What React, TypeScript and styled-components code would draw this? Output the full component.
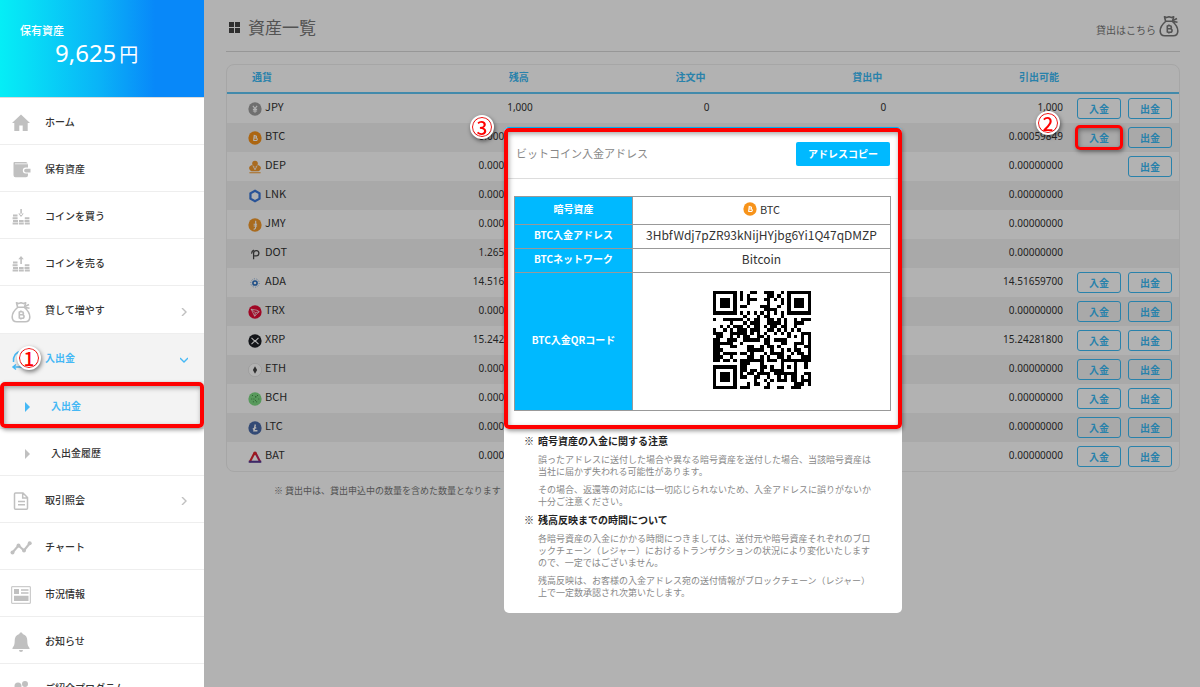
import React from 'react';
import styled, { createGlobalStyle, css } from 'styled-components';

/* ---------- QR symbol (version 3, level M, byte mode) ---------- */

const QR_SIZE = 29;
const QR_DATA = 44;
const QR_TOTAL = 70;
const QR_MASK = 6;

const multiply = (a: number, b: number) => {
  let r = 0;
  for (let i = 7; i >= 0; i--) {
    r = (r << 1) ^ ((r >>> 7) * 0x11d);
    r ^= ((b >>> i) & 1) * a;
  }
  return r;
};

const errorCodewords = (data: number[], count: number) => {
  const gen: number[] = new Array(count).fill(0);
  gen[count - 1] = 1;
  let root = 1;
  for (let i = 0; i < count; i++) {
    for (let j = 0; j < count; j++) {
      gen[j] = multiply(gen[j], root);
      if (j + 1 < count) gen[j] ^= gen[j + 1];
    }
    root = multiply(root, 2);
  }
  const rem: number[] = new Array(count).fill(0);
  for (const byte of data) {
    const factor = byte ^ (rem.shift() as number);
    rem.push(0);
    gen.forEach((g, i) => {
      rem[i] ^= multiply(g, factor);
    });
  }
  return rem;
};

const qrPath = (text: string) => {
  const bits: number[] = [];
  const put = (v: number, n: number) => {
    for (let i = n - 1; i >= 0; i--) bits.push((v >>> i) & 1);
  };
  put(4, 4);
  put(text.length, 8);
  for (const c of text) put(c.charCodeAt(0), 8);
  put(0, 4);
  const data: number[] = [];
  for (let i = 0; i < bits.length; i += 8) data.push(parseInt(bits.slice(i, i + 8).join(''), 2));
  for (let p = 0xec; data.length < QR_DATA; p ^= 0xec ^ 0x11) data.push(p);
  const words = data.concat(errorCodewords(data, QR_TOTAL - QR_DATA));

  const dark = Array.from({ length: QR_SIZE }, () => new Array<boolean>(QR_SIZE).fill(false));
  const fixed = Array.from({ length: QR_SIZE }, () => new Array<boolean>(QR_SIZE).fill(false));
  const set = (x: number, y: number, v: boolean) => {
    if (x < 0 || y < 0 || x >= QR_SIZE || y >= QR_SIZE) return;
    dark[y][x] = v;
    fixed[y][x] = true;
  };
  for (let i = 0; i < QR_SIZE; i++) {
    set(6, i, i % 2 === 0);
    set(i, 6, i % 2 === 0);
  }
  for (const [cx, cy] of [[3, 3], [QR_SIZE - 4, 3], [3, QR_SIZE - 4]]) {
    for (let dy = -4; dy <= 4; dy++) {
      for (let dx = -4; dx <= 4; dx++) {
        const d = Math.max(Math.abs(dx), Math.abs(dy));
        set(cx + dx, cy + dy, d !== 2 && d !== 4);
      }
    }
  }
  for (let dy = -2; dy <= 2; dy++) {
    for (let dx = -2; dx <= 2; dx++) set(22 + dx, 22 + dy, Math.max(Math.abs(dx), Math.abs(dy)) !== 1);
  }
  let rem = QR_MASK;
  for (let i = 0; i < 10; i++) rem = (rem << 1) ^ ((rem >>> 9) * 0x537);
  const format = ((QR_MASK << 10) | rem) ^ 0x5412;
  const bit = (i: number) => ((format >>> i) & 1) === 1;
  for (let i = 0; i <= 5; i++) set(8, i, bit(i));
  set(8, 7, bit(6));
  set(8, 8, bit(7));
  set(7, 8, bit(8));
  for (let i = 9; i < 15; i++) set(14 - i, 8, bit(i));
  for (let i = 0; i < 8; i++) set(QR_SIZE - 1 - i, 8, bit(i));
  for (let i = 8; i < 15; i++) set(8, QR_SIZE - 15 + i, bit(i));
  set(8, QR_SIZE - 8, true);

  let k = 0;
  for (let r = QR_SIZE - 1; r >= 1; r -= 2) {
    if (r === 6) r = 5;
    for (let v = 0; v < QR_SIZE; v++) {
      for (let j = 0; j < 2; j++) {
        const x = r - j;
        const y = ((r + 1) & 2) === 0 ? QR_SIZE - 1 - v : v;
        if (fixed[y][x]) continue;
        const value = k < QR_TOTAL * 8 && ((words[k >>> 3] >>> (7 - (k & 7))) & 1) === 1;
        k++;
        dark[y][x] = value !== ((((x * y) % 2) + ((x * y) % 3)) % 2 === 0);
      }
    }
  }
  return dark.map((row, y) => row.map((v, x) => (v ? `M${x} ${y}h1v1h-1z` : '')).join('')).join('');
};

/* ---------- Styles ---------- */

const Global = createGlobalStyle`
  *, *::before, *::after { box-sizing: border-box; }
  body {
    margin: 0;
    background: #fff;
    color: #333;
    font: 10px/12px "Noto Sans CJK JP", "Noto Sans", sans-serif;
  }
  a { color: inherit; text-decoration: none; }
  button { font: inherit; cursor: pointer; }
  ul, h1, h2, h3, p { margin: 0; padding: 0; list-style: none; }
`;

const Shell = styled.div`
  display: flex;
  height: 100vh;
  overflow: hidden;
`;

const Sidebar = styled.aside`
  flex: 0 0 204px;
  overflow: hidden;
  background: #fff;
`;

const Total = styled.div`
  height: 98px;
  padding: 22px 20px 0;
  color: #fff;
  background: linear-gradient(90deg, #05eef6 0%, #07e0f6 12%, #0ab4f7 48%, #0888f9 76%);
  border-bottom: 1px solid #dcdcdc;
`;

const TotalLabel = styled.div`
  font-size: 11px;
  line-height: 16px;
  font-weight: 500;
`;

const TotalValue = styled.div`
  padding-left: 35px;
  font: 24px/30px "Noto Sans", sans-serif;
  white-space: nowrap;
`;

const Yen = styled.span`
  margin-left: 3px;
  font: 19px/24px "Noto Sans CJK JP", sans-serif;
`;

const MenuItem = styled.li<{ $active?: boolean; $tall?: boolean }>`
  position: relative;
  height: ${(p) => (p.$tall ? 48 : 47)}px;
  border-bottom: 1px solid #eee;
  ${(p) => p.$active && css`
    color: #45b8f5;
    background: #f3f3f3;
  `}
`;

const MenuLink = styled.a<{ $sub?: boolean }>`
  display: flex;
  align-items: center;
  height: 100%;
  padding-top: 1px;
  padding-right: 16px;
  padding-left: ${(p) => (p.$sub ? 24 : 10)}px;
`;

const IconSlot = styled.span<{ $sub?: boolean }>`
  display: flex;
  flex: 0 0 ${(p) => (p.$sub ? 27 : 35)}px;
  padding-top: 3px;
  color: #c0c0c0;
`;

const ItemText = styled.span<{ $active?: boolean }>`
  flex: 1;
  font-weight: ${(p) => (p.$active ? 700 : 500)};
`;

const Arrow = styled.svg<{ $active?: boolean }>`
  width: 8px;
  height: 8px;
  margin-top: 3px;
  fill: none;
  stroke: ${(p) => (p.$active ? '#45b8f5' : '#c0c0c0')};
  stroke-width: 1.4;
  transform: ${(p) => (p.$active ? 'rotate(90deg)' : 'none')};
`;

const Triangle = styled.svg<{ $active?: boolean }>`
  width: 6px;
  height: 10px;
  fill: ${(p) => (p.$active ? '#45b8f5' : '#c0c0c0')};
`;

const Glyph = styled.svg`
  width: 22px;
  height: 22px;
  fill: currentColor;
`;

const Frame = styled.span<{ $gap?: number; $line?: number }>`
  position: absolute;
  z-index: 30;
  inset: ${(p) => -(p.$gap ?? 0)}px;
  border: ${(p) => p.$line ?? 4}px solid #f00;
  border-radius: 5px;
  box-shadow: 1px 2px 4px rgba(0, 0, 0, 0.4), inset 1px 2px 5px rgba(0, 0, 0, 0.35);
  pointer-events: none;
`;

const Marker = styled.span<{ $left?: string; $right?: string; $top: string }>`
  position: absolute;
  z-index: 40;
  top: ${(p) => p.$top};
  left: ${(p) => p.$left ?? 'auto'};
  right: ${(p) => p.$right ?? 'auto'};
  width: 20px;
  height: 20px;
  border: 1px solid #f00;
  border-radius: 50%;
  background: #fff;
  outline: 2px solid #fff;
  box-shadow: 1px 2px 4px 2px rgba(0, 0, 0, 0.5);
  color: #f00;
  font: 500 19px/18px "Noto Sans CJK JP", sans-serif;
  text-align: center;
`;

const Main = styled.main`
  flex: 1;
  min-width: 0;
  padding: 0 20px 0 22px;
`;

const PageHead = styled.header`
  display: flex;
  align-items: center;
  justify-content: space-between;
  height: 52px;
  margin-bottom: 12px;
  border-bottom: 1px solid #d9d9d9;
  color: #777;
`;

const PageTitle = styled.h1`
  display: flex;
  align-items: center;
  gap: 8px;
  padding: 3px 0 0 3px;
  font-size: 17px;
  line-height: 24px;
  font-weight: 400;
`;

const LendLink = styled.a`
  display: flex;
  align-items: center;
  gap: 2px;
  padding-top: 8px;
`;

const BagIcon = styled(Glyph)`
  margin-top: -8px;
`;

const Card = styled.section`
  border: 1px solid #eee;
  border-radius: 8px;
`;

const AssetTable = styled.table`
  width: 100%;
  table-layout: fixed;
  border-collapse: separate;
  border-spacing: 0;
`;

const CurrencyCol = styled.col`
  width: 129px;
`;

const ActionCol = styled.col`
  width: 116px;
`;

const Head = styled.th<{ $first?: boolean }>`
  height: 29px;
  padding: 0 ${(p) => (p.$first ? 0 : 4)}px 3px ${(p) => (p.$first ? 25 : 0)}px;
  border-bottom: 2px solid #5fc6f5;
  color: #3bbaf5;
  font-weight: 700;
  text-align: ${(p) => (p.$first ? 'left' : 'right')};
`;

const AssetRow = styled.tr`
  height: 29px;
  &:nth-child(even) { background: #f2f2f2; }
`;

const Amount = styled.td`
  position: relative;
  padding: 0 0 4px;
  font-family: "Noto Sans", sans-serif;
  text-align: right;
`;

const CurrencyCell = styled.td`
  padding: 0 0 0 21px;
`;

const Coin = styled.div`
  display: flex;
  align-items: center;
  gap: 3px;
  font-size: 11px;
`;

const CoinName = styled.span`
  padding-bottom: 5px;
`;

const CoinSvg = styled.svg`
  width: 14px;
  height: 14px;
`;

const ActionCell = styled.td`
  padding: 0;
`;

const Actions = styled.div`
  display: flex;
  justify-content: flex-end;
  gap: 7px;
  padding-right: 7px;
`;

const Spot = styled.span`
  position: relative;
  display: flex;
`;

const OutlineButton = styled.button`
  width: 44px;
  height: 21px;
  padding: 1px 0 0;
  border: 1px solid #3bbaf5;
  border-radius: 3px;
  background: #fff0;
  color: #3bbaf5;
  font-weight: 700;
`;

const Footnote = styled.p`
  padding: 13px 0 0 48px;
  color: #777;
  font-size: 9px;
`;

const Overlay = styled.div`
  position: fixed;
  z-index: 10;
  inset: 0 0 0 204px;
  display: flex;
  justify-content: center;
  align-items: flex-start;
  padding: 127px 0 0 2px;
  background: rgba(0, 0, 0, 0.3);
`;

const Dialog = styled.div`
  position: relative;
  width: 398px;
  padding-bottom: 14px;
  border-radius: 5px;
  background: #fff;
`;

const AddressPart = styled.section`
  position: relative;
  padding-bottom: 18px;
  border-top: 1px solid #00b9ff;
  border-radius: 5px;
`;

const DialogHead = styled.header`
  display: flex;
  align-items: center;
  justify-content: space-between;
  height: 51px;
  padding: 2px 12px 0 12px;
  margin-bottom: 17px;
  border-bottom: 1px solid #ddd;
`;

const DialogTitle = styled.h2`
  padding-bottom: 3px;
  color: #888;
  font-size: 11px;
  font-weight: 400;
`;

const CopyButton = styled.button`
  width: 94px;
  height: 24px;
  padding: 0;
  border: 0;
  border-radius: 2px;
  background: #00b9ff;
  color: #fff;
  font-weight: 700;
`;

const InfoTable = styled.table`
  width: calc(100% - 21px);
  margin-left: 10px;
  border-collapse: collapse;
`;

const InfoHead = styled.th`
  width: 118px;
  padding: 0 0 3px;
  border: 1px solid #999;
  background: #00b9ff;
  color: #fff;
  font-weight: 700;
`;

const InfoCell = styled.td<{ $height: number }>`
  height: ${(p) => p.$height}px;
  padding: 0 0 3px;
  border: 1px solid #999;
  font-size: 12px;
  text-align: center;
`;

const CenterCoin = styled(Coin)`
  justify-content: center;
`;

const QrSvg = styled.svg`
  display: block;
  width: 98px;
  height: 98px;
  margin: 0 auto;
`;

const Notes = styled.section`
  padding: 6px 20px 0;
`;

const NoteTitle = styled.h3`
  display: flex;
  gap: 4px;
  font-size: 10px;
  line-height: 12px;
  font-weight: 700;
  color: #222;
`;

const Note = styled.p`
  padding: 6px 0 0 14px;
  color: #888;
  font-size: 9px;
  line-height: 12px;
  white-space: nowrap;

  ${NoteTitle} + & { padding-top: 7px; }
  & + ${NoteTitle} { margin-top: 6px; }
`;

/* ---------- Icons ---------- */

const MoneyBag = () => (
  <g fill="none" stroke="currentColor" strokeWidth="1.6" strokeLinejoin="round">
    <path d="M6.500 1.800l2 .8 2.500-.8 2.500.8 2.200-.8-1.200 4.400H7.600z" />
    <path d="M7.600 6.500C4.500 9 2.200 12.500 2.200 16c0 3.500 2 4.800 4.600 4.800h8.400c2.600 0 4.600-1.300 4.600-4.800 0-3.500-2.300-7-5.400-9.500M15 5.500l4-2M15.500 6.500l4 .8" />
    <path d="M9.300 10.500v7M9.300 10.800h2.600a1.500 1.500 0 010 3H9.300h3a1.700 1.700 0 010 3.500h-3M10.900 9.600v1M10.900 17.500v1" strokeWidth="1.600" />
  </g>
);

const CoinStacks = ({ up }: { up?: boolean }) => (
  <g>
    <path d={up ? 'M10.300 5h1.600v6h-1.600zM8.300 6.300L11 3l2.800 3.300z' : 'M10.300 3h1.600v6h-1.600zM8.300 7.600L11 11l2.800-3.400z'} />
    <path d="M3 8.500h4.500v2H3zM2.600 11.200h5v2h-5zM3 13.900h5v2H3zM2.600 16.600h5.400v2H2.600zM9 13.900h4.600v2H9zM8.800 16.600h5v2h-5zM14.800 11.200h4.600v2h-4.600zM14.500 13.900h5v2h-5zM14.800 16.600h5v2h-5z" />
  </g>
);

const glyphs: Record<string, React.ReactNode> = {
  home: <path d="M11 2.500L20 11h-2.300v8h-5v-5.500H9.300V19h-5v-8H2z" />,
  wallet: (
    <path d="M4.500 3h11.200a2 2 0 012 1.500H5v.8h13v3.200h-2.200a3 3 0 000 6H18v1.700a2 2 0 01-2 2H5.500a2 2 0 01-2-2V4.300c0-.8.400-1.300 1-1.300zM16 9.700h4.500v3.800H16a1.900 1.900 0 010-3.800z" />
  ),
  buy: <CoinStacks />,
  sell: <CoinStacks up />,
  bag: <MoneyBag />,
  transfer: (
    <g fill="none" stroke="#45b8f5" strokeWidth="1.500">
      <path d="M12 2C6 3 3 7 3.500 13M3 18h16M6 15.500L3 18l3 2.500" />
    </g>
  ),
  doc: (
    <g fill="none" stroke="currentColor" strokeWidth="1.500">
      <path d="M5.500 3H13l4.500 4.500v10.700a1 1 0 01-1 1h-11a1 1 0 01-1-1V4a1 1 0 011-1zM12.700 3v5h4.800M8 11.500h7M8 14.700h7" />
    </g>
  ),
  chart: (
    <g>
      <path d="M2.500 15.500l6-7 5.500 5 6-7.500" fill="none" stroke="currentColor" strokeWidth="2.200" />
      <circle cx="2.500" cy="15.500" r="2" />
      <circle cx="8.500" cy="8.500" r="2" />
      <circle cx="14" cy="13.500" r="2" />
      <circle cx="19.700" cy="6.300" r="2" />
    </g>
  ),
  news: (
    <g>
      <path d="M1.700 2.700h18.600v16.600H1.700z" fill="none" stroke="currentColor" strokeWidth="1" />
      <path d="M4 5h5v5H4zM11 5.200h7.500v1.600H11zM11 8.200h7.500v1.600H11zM4 11.800h14.500v5.200H4z" />
    </g>
  ),
  bell: (
    <path d="M11 1.500c1 0 1.600.7 1.700 1.600 3 .8 4.600 3.200 4.600 6.400 0 4.500.8 5.500 2.200 7.500v1h-17v-1c1.400-2 2.200-3 2.200-7.500 0-3.200 1.600-5.600 4.600-6.400.1-.9.700-1.600 1.700-1.600zM9 19h4a2 2 0 01-4 0z" />
  ),
  people: (
    <path d="M8 4.500a3.500 3.500 0 110 7 3.500 3.500 0 010-7zM15 3a3 3 0 110 6 3 3 0 010-6zM2 19c0-4 2.500-6 6-6s6 2 6 6z" />
  ),
};

const Disc = ({ fill, children }: { fill: string; children?: React.ReactNode }) => (
  <>
    <circle cx="10" cy="10" r="9.500" fill={fill} />
    <g fill="none" stroke="#fff" strokeWidth="1.600">{children}</g>
  </>
);

const coinArt: Record<string, React.ReactNode> = {
  JPY: <Disc fill="#a0a0a0"><path d="M7 5.500l3 4 3-4M10 9.500v6M7 10.500h6M7 12.800h6" /></Disc>,
  BTC: <Disc fill="#f7931a"><path d="M9 5.500l-1 8.500M8.800 7h2a1.500 1.500 0 010 3H8.500h3a1.800 1.800 0 010 3.600H8" /></Disc>,
  DEP: (
    <g fill="#f39a2e">
      <circle cx="10" cy="5" r="4" />
      <path d="M1.500 11a4.500 4.500 0 018-2l.5 1 .5-1a4.500 4.500 0 018 2c0 3-2 4-3.500 5H5c-1.500-1-3.500-2-3.500-5zM2 17.500h16v1.500H2z" />
      <path d="M7 8l3 6 3-6" fill="none" stroke="#fff" strokeWidth="1.200" />
    </g>
  ),
  LNK: <path d="M10 2.500l6.500 3.700v7.600L10 17.500l-6.500-3.700V6.200z" fill="#fff" stroke="#3b78d8" strokeWidth="3.200" />,
  JMY: <Disc fill="#f29a2c"><path d="M11 4v9a3 3 0 01-3 3M8 9h5M8 11.500h5" /></Disc>,
  DOT: <path d="M8 17.500V7.500M8 8.500a3.800 3.800 0 113.800 4.200H9M5.300 9.500a5 5 0 013-5" fill="none" stroke="#444" strokeWidth="1.800" />,
  ADA: (
    <g fill="none" stroke="#2a6fc0">
      <circle cx="10" cy="10" r="3" strokeWidth="2.200" />
      <circle cx="10" cy="10" r="6" strokeWidth="1.400" strokeDasharray="1.500 2.200" opacity="0.600" />
    </g>
  ),
  TRX: <Disc fill="#e50b35"><path d="M4.500 6l8.500 1.500 3 2-6.500 6.500zM4.500 6l6 5 5.500-1.500M10.500 11l-1 5" strokeWidth="1" /></Disc>,
  XRP: <Disc fill="#1c1f24"><path d="M5 5.500l3.200 3.200a2.500 2.500 0 003.600 0L15 5.500M5 14.500l3.200-3.200a2.500 2.500 0 013.600 0L15 14.500" /></Disc>,
  ETH: (
    <>
      <circle cx="10" cy="10" r="9.500" fill="#fff" stroke="#ddd" />
      <path d="M10 4.500l3 5.500-3 5.500L7 10z" fill="#444" />
    </>
  ),
  BCH: (
    <>
      <Disc fill="#7fdc84" />
      <path d="M6 5h1M13 5h1M10 7h2M5 10h1M8 10h1M15 10h1M7 14h1M12 14h1M10 12h1" stroke="#256b2e" strokeWidth="1.400" />
    </>
  ),
  LTC: <Disc fill="#4a6aa8"><path d="M10.500 5L8.500 14h5M6.800 11.500l5-2" strokeWidth="2" /></Disc>,
  BAT: (
    <g fill="none" strokeWidth="3">
      <path d="M10 3L2.500 17" stroke="#e0242d" />
      <path d="M10 3l7.500 14" stroke="#c42058" />
      <path d="M1 16.800h18" stroke="#5a3a94" />
      <path d="M10 3l-2 4M10 3l2 4" stroke="#e0242d" />
    </g>
  ),
};

const CoinIcon = ({ code }: { code: string }) => (
  <CoinSvg viewBox="0 0 20 20" aria-hidden="true">{coinArt[code]}</CoinSvg>
);

/* ---------- Data ---------- */

const menu = [
  { icon: 'home', text: 'ホーム' },
  { icon: 'wallet', text: '保有資産' },
  { icon: 'buy', text: 'コインを買う' },
  { icon: 'sell', text: 'コインを売る' },
  { icon: 'bag', text: '貸して増やす', arrow: true, tall: true },
  { icon: 'transfer', text: '入出金', arrow: true, tall: true, active: true, marker: true },
  { text: '入出金', sub: true, active: true, framed: true },
  { text: '入出金履歴', sub: true },
  { icon: 'doc', text: '取引照会', arrow: true },
  { icon: 'chart', text: 'チャート' },
  { icon: 'news', text: '市況情報' },
  { icon: 'bell', text: 'お知らせ' },
  { icon: 'people', text: 'ご紹介プログラム' },
];

const ZERO = '0.00000000';

const assets = [
  { code: 'JPY', balance: '1,000', free: '1,000', used: '0', actions: 2 },
  { code: 'BTC', balance: '0.00059849', free: '0.00059849', actions: 2, marked: true },
  { code: 'DEP', balance: ZERO, free: ZERO, actions: 1 },
  { code: 'LNK', balance: ZERO, free: ZERO, actions: 0 },
  { code: 'JMY', balance: ZERO, free: ZERO, actions: 0 },
  { code: 'DOT', balance: '1.26500000', free: ZERO, actions: 0 },
  { code: 'ADA', balance: '14.51659700', free: '14.51659700', actions: 2 },
  { code: 'TRX', balance: ZERO, free: ZERO, actions: 2 },
  { code: 'XRP', balance: '15.24281800', free: '15.24281800', actions: 2 },
  { code: 'ETH', balance: ZERO, free: ZERO, actions: 2 },
  { code: 'BCH', balance: ZERO, free: ZERO, actions: 2 },
  { code: 'LTC', balance: ZERO, free: ZERO, actions: 2 },
  { code: 'BAT', balance: ZERO, free: ZERO, actions: 2 },
];

const ADDRESS = '3HbfWdj7pZR93kNijHYjbg6Yi1Q47qDMZP';

/* ---------- Page ---------- */

export default function App() {
  return (
    <Shell>
      <Global />
      <Sidebar>
        <Total>
          <TotalLabel>保有資産</TotalLabel>
          <TotalValue>9,625<Yen>円</Yen></TotalValue>
        </Total>
        <nav>
          <ul>
            {menu.map((m, i) => (
              <MenuItem key={i} $active={m.active} $tall={m.tall}>
                <MenuLink href="#" $sub={m.sub}>
                  <IconSlot $sub={m.sub}>
                    {m.icon ? (
                      <Glyph viewBox="0 0 22 22" aria-hidden="true">{glyphs[m.icon]}</Glyph>
                    ) : (
                      <Triangle $active={m.active} viewBox="0 0 6 10" aria-hidden="true"><path d="M1 0l5 5-5 5z" /></Triangle>
                    )}
                  </IconSlot>
                  <ItemText $active={m.active}>{m.text}</ItemText>
                  {m.arrow && (
                    <Arrow $active={m.active} viewBox="0 0 8 8" aria-hidden="true"><path d="M2 0l4 4-4 4" /></Arrow>
                  )}
                </MenuLink>
                {m.framed && <Frame />}
                {m.marker && <Marker $left="19px" $top="14px">1</Marker>}
              </MenuItem>
            ))}
          </ul>
        </nav>
      </Sidebar>

      <Main>
        <PageHead>
          <PageTitle>
            <svg width="11" height="11" viewBox="0 0 11 11" fill="#444" aria-hidden="true">
              <path d="M0 0h5v5H0zM6 0h5v5H6zM0 6h5v5H0zM6 6h5v5H6z" />
            </svg>
            資産一覧
          </PageTitle>
          <LendLink href="#">
            貸出はこちら
            <BagIcon viewBox="0 0 22 22" aria-hidden="true"><MoneyBag /></BagIcon>
          </LendLink>
        </PageHead>

        <Card>
          <AssetTable>
            <colgroup>
              <CurrencyCol />
              <col />
              <col />
              <col />
              <col />
              <ActionCol />
            </colgroup>
            <thead>
              <tr>
                <Head $first>通貨</Head>
                <Head>残高</Head>
                <Head>注文中</Head>
                <Head>貸出中</Head>
                <Head>引出可能</Head>
                <Head />
              </tr>
            </thead>
            <tbody>
              {assets.map((a) => (
                <AssetRow key={a.code}>
                  <CurrencyCell>
                    <Coin>
                      <CoinIcon code={a.code} />
                      <CoinName>{a.code}</CoinName>
                    </Coin>
                  </CurrencyCell>
                  <Amount>{a.balance}</Amount>
                  <Amount>{a.used}</Amount>
                  <Amount>{a.used}</Amount>
                  <Amount>
                    {a.free}
                    {a.marked && <Marker $right="5px" $top="-10px">2</Marker>}
                  </Amount>
                  <ActionCell>
                    <Actions>
                      {a.actions > 1 && (
                        <Spot>
                          <OutlineButton type="button">入金</OutlineButton>
                          {a.marked && <Frame $gap={2} $line={3} />}
                        </Spot>
                      )}
                      {a.actions > 0 && <OutlineButton type="button">出金</OutlineButton>}
                    </Actions>
                  </ActionCell>
                </AssetRow>
              ))}
            </tbody>
          </AssetTable>
        </Card>
        <Footnote>※ 貸出中は、貸出申込中の数量を含めた数量となります</Footnote>
      </Main>

      <Overlay>
        <Dialog role="dialog" aria-label="ビットコイン入金アドレス">
          <AddressPart>
            <DialogHead>
              <DialogTitle>ビットコイン入金アドレス</DialogTitle>
              <CopyButton type="button">アドレスコピー</CopyButton>
            </DialogHead>
            <InfoTable>
              <tbody>
                <tr>
                  <InfoHead scope="row">暗号資産</InfoHead>
                  <InfoCell $height={28}>
                    <CenterCoin>
                      <CoinIcon code="BTC" />
                      BTC
                    </CenterCoin>
                  </InfoCell>
                </tr>
                <tr>
                  <InfoHead scope="row">BTC入金アドレス</InfoHead>
                  <InfoCell $height={24}>{ADDRESS}</InfoCell>
                </tr>
                <tr>
                  <InfoHead scope="row">BTCネットワーク</InfoHead>
                  <InfoCell $height={24}>Bitcoin</InfoCell>
                </tr>
                <tr>
                  <InfoHead scope="row">BTC入金QRコード</InfoHead>
                  <InfoCell $height={138}>
                    <QrSvg viewBox={`0 0 ${QR_SIZE} ${QR_SIZE}`} shapeRendering="crispEdges" role="img" aria-label="QR">
                      <path d={qrPath(ADDRESS)} />
                    </QrSvg>
                  </InfoCell>
                </tr>
              </tbody>
            </InfoTable>
            <Frame />
            <Marker $left="-32px" $top="-11px">3</Marker>
          </AddressPart>
          <Notes>
            <NoteTitle><span>※</span>暗号資産の入金に関する注意</NoteTitle>
            <Note>
              誤ったアドレスに送付した場合や異なる暗号資産を送付した場合、当該暗号資産は<br />
              当社に届かず失われる可能性があります。
            </Note>
            <Note>
              その場合、返還等の対応には一切応じられないため、入金アドレスに誤りがないか<br />
              十分ご注意ください。
            </Note>
            <NoteTitle><span>※</span>残高反映までの時間について</NoteTitle>
            <Note>
              各暗号資産の入金にかかる時間につきましては、送付元や暗号資産それぞれのブロ<br />
              ックチェーン（レジャー）におけるトランザクションの状況により変化いたします<br />
              ので、一定ではございません。
            </Note>
            <Note>
              残高反映は、お客様の入金アドレス宛の送付情報がブロックチェーン（レジャー）<br />
              上で一定数承認され次第いたします。
            </Note>
          </Notes>
        </Dialog>
      </Overlay>
    </Shell>
  );
}
